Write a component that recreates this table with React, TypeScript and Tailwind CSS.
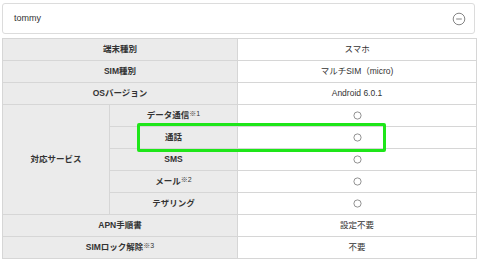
import { Fragment } from "react";

type Row = { label: string; sup?: string; value: string };

const top: Row[] = [
  { label: "端末種別", value: "スマホ" },
  { label: "SIM種別", value: "マルチSIM（micro)" },
  { label: "OSバージョン", value: "Android 6.0.1" },
];

const services: Row[] = [
  { label: "データ通信", sup: "※1", value: "○" },
  { label: "通話", value: "○" },
  { label: "SMS", value: "○" },
  { label: "メール", sup: "※2", value: "○" },
  { label: "テザリング", value: "○" },
];

const bottom: Row[] = [
  { label: "APN手順書", value: "設定不要" },
  { label: "SIMロック解除", sup: "※3", value: "不要" },
];

function Label({ row }: { row: Row }) {
  return (
    <>
      {row.label}
      {row.sup && <sup className="relative -top-[2px] text-[7px] font-normal">{row.sup}</sup>}
    </>
  );
}

function Maru() {
  return (
    <svg width="9" height="9" viewBox="0 0 9 9" className="inline-block align-middle">
      <circle cx="4.5" cy="4.5" r="3.6" fill="none" stroke="#777" strokeWidth="0.8" />
    </svg>
  );
}

const labelCell = "border border-[#d6d6d6] bg-[#ebebeb] text-center font-bold text-[#333]";
const valueCell = "border border-[#d6d6d6] bg-white text-center text-[#333]";

export default function App() {
  return (
    <div
      className="relative w-[480px] bg-white pl-[2px] pt-[3px] text-[8.5px] leading-none"
      style={{ fontFamily: '"Liberation Sans", "Noto Sans CJK JP", sans-serif' }}
    >
      <div className="flex h-[31px] w-[473px] items-center justify-between rounded-[3px] border border-[#dcdcdc] px-[11px]">
        <span className="text-[9px] text-[#333]">tommy</span>
        <svg width="14" height="14" viewBox="0 0 14 14" className="mr-[-3px]">
          <circle cx="7" cy="7" r="5.8" fill="none" stroke="#777" strokeWidth="0.9" />
          <line x1="4.2" y1="7" x2="9.8" y2="7" stroke="#777" strokeWidth="0.9" />
        </svg>
      </div>

      <table className="mt-[4px] w-[474px] table-fixed border-collapse">
        <colgroup>
          <col className="w-[107px]" />
          <col className="w-[128px]" />
          <col className="w-[239px]" />
        </colgroup>
        <tbody>
          {top.map((r) => (
            <tr key={r.label} className="h-[22px]">
              <td colSpan={2} className={labelCell}>
                <Label row={r} />
              </td>
              <td className={valueCell}>{r.value}</td>
            </tr>
          ))}
          {services.map((r, i) => (
            <tr key={r.label} className="h-[22px]">
              {i === 0 && (
                <td rowSpan={5} className={labelCell}>
                  対応サービス
                </td>
              )}
              <td className={labelCell}>
                <Label row={r} />
              </td>
              <td className={valueCell}>
                <Maru />
              </td>
            </tr>
          ))}
          {bottom.map((r) => (
            <Fragment key={r.label}>
              <tr className="h-[22px]">
                <td colSpan={2} className={labelCell}>
                  <Label row={r} />
                </td>
                <td className={valueCell}>{r.value}</td>
              </tr>
            </Fragment>
          ))}
        </tbody>
      </table>

      <div className="absolute left-[137px] top-[123px] h-[29px] w-[249px] rounded-[2px] border-[3px] border-[#1ee619]" />
    </div>
  );
}
